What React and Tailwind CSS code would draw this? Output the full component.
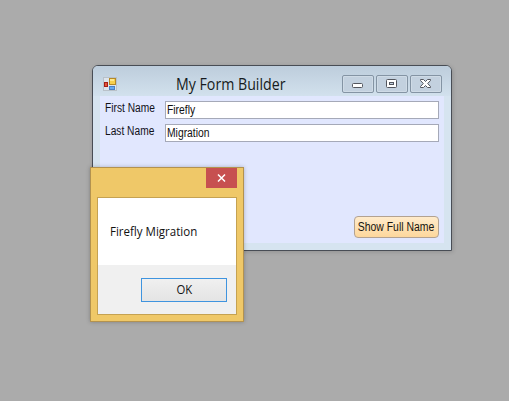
const ui = "font-['Open_Sans','Noto_Sans',sans-serif]";

function FormIcon() {
  return (
    <svg width="15" height="15" viewBox="0 0 15 15" className="ml-[10px] mt-[11px] shrink-0">
      <rect x="0.5" y="0.5" width="13" height="13" fill="#dde4ec" stroke="#b9c1c9" />
      <rect x="6.5" y="1.5" width="6" height="6" fill="#f7cf4c" stroke="#b58a28" />
      <rect x="7" y="2" width="4" height="2" fill="#ffe88c" />
      <rect x="1.5" y="5.5" width="3" height="4" fill="#e2553c" stroke="#a51d16" />
      <rect x="6.5" y="9.5" width="5" height="3" fill="#68a9ef" stroke="#4a80c4" />
    </svg>
  );
}

function Caption({ children }) {
  return (
    <div className="flex h-[18px] w-8 items-center justify-start rounded-[2px] border border-[#8494a4] bg-[#c3d1df] pl-[8px] shadow-[inset_0_0_0_1px_#cfdbe6]">
      <svg width="13" height="12" viewBox="0 0 13 12">{children}</svg>
    </div>
  );
}

function Field({ label, value }) {
  return (
    <div className="flex h-[18px]">
      <div className="w-[60px] text-[12px] leading-[14px] text-[#111119]">
        <span className="inline-block origin-left scale-x-[.85] whitespace-nowrap">{label}</span>
      </div>
      <div className="h-[18px] w-[274px] border border-[#a5a9b8] bg-white pl-px text-[12px] leading-[17px] text-[#111]">
        <span className="inline-block origin-left scale-x-[.86] whitespace-nowrap">{value}</span>
      </div>
    </div>
  );
}

export default function App() {
  return (
    <div className="relative h-[401px] w-[509px] overflow-hidden bg-[#ababab] font-['Liberation_Sans',Arial,sans-serif]">
      <section className="absolute left-[92px] top-[65px] flex h-[186px] w-[360px] flex-col rounded-t-[6px] border border-[#484d55] bg-[#d6e4f0] shadow-[inset_0_1px_0_#e2ebf3,1px_1px_4px_rgba(0,0,0,.15)]">
        <header className="flex h-[30px] shrink-0 rounded-t-[5px] bg-linear-to-b from-[#bdcddc] to-[#d2e1ed]">
          <FormIcon />
          <h1 className={`${ui} ml-[58px] mt-[8px] w-[166px] text-[15.5px] leading-[21px] text-[#161b20]`}>
            <span className="inline-block origin-left scale-x-[.915] whitespace-nowrap">My Form Builder</span>
          </h1>
          <div className="mt-[9px] flex gap-[2px]">
            <Caption>
              <rect x="1.5" y="5.5" width="10" height="4" rx="1" fill="#fff" stroke="#53565e" />
            </Caption>
            <Caption>
              <rect x="1.5" y="1.5" width="10" height="8" rx="1" fill="#fff" stroke="#53565e" />
              <rect x="4.5" y="4.5" width="4" height="2" fill="#c3d1df" stroke="#53565e" />
            </Caption>
            <Caption>
              <path d="M1.5 1.5h3l2 2 2-2h3v1L8.7 5.5l2.8 3v1h-3l-2-2-2 2h-3v-1l2.8-3-2.8-3z" fill="#fff" stroke="#53565e" />
            </Caption>
          </div>
        </header>
        <main className="mx-[7px] mb-[7px] flex grow flex-col bg-[#e1e7fe] pl-[5px] pr-[5px] pt-[5px]">
          <div className="flex flex-col gap-[5px]">
            <Field label="First Name" value="Firefly" />
            <Field label="Last Name" value="Migration" />
          </div>
          <button className="mb-[5px] ml-auto mt-auto flex h-[22px] w-[85px] items-center justify-center rounded-[4px] border border-[#b3a291] bg-linear-to-b from-[#ffebcb] to-[#fdd79c] text-[12px] text-[#171410]">
            <span className="inline-block scale-x-[.87] whitespace-nowrap">Show Full Name</span>
          </button>
        </main>
      </section>

      <section className={`${ui} absolute left-[90px] top-[167px] h-[155px] w-[154px] border border-[#b3924f] bg-[#efc868] text-[12px] text-[#111] shadow-[0_0_4px_rgba(0,0,0,.25)]`}>
        <div className="flex h-[29px] justify-end pr-[6px]">
          <div className="flex h-5 w-[31px] items-center justify-center bg-[#c75050]">
            <svg width="9" height="8" viewBox="0 0 9 8"><path d="M1 .5l7 7M8 .5l-7 7" stroke="#fff" strokeWidth="1.5" /></svg>
          </div>
        </div>
        <div className="mx-[6px] flex h-[118px] flex-col border border-[#c5a252] bg-[#f0f0f0]">
          <div className="flex h-[67px] items-center bg-white pl-3">
            <span className="inline-block origin-left scale-x-[.96] whitespace-nowrap">Firefly Migration</span>
          </div>
          <button className="ml-[43px] mt-[13px] flex h-6 w-[86px] items-center justify-center border border-[#3f94df] bg-linear-to-b from-[#f0f0f0] to-[#e4e4e4]">
            <span className="inline-block scale-x-[.94]">OK</span>
          </button>
        </div>
      </section>
    </div>
  );
}
